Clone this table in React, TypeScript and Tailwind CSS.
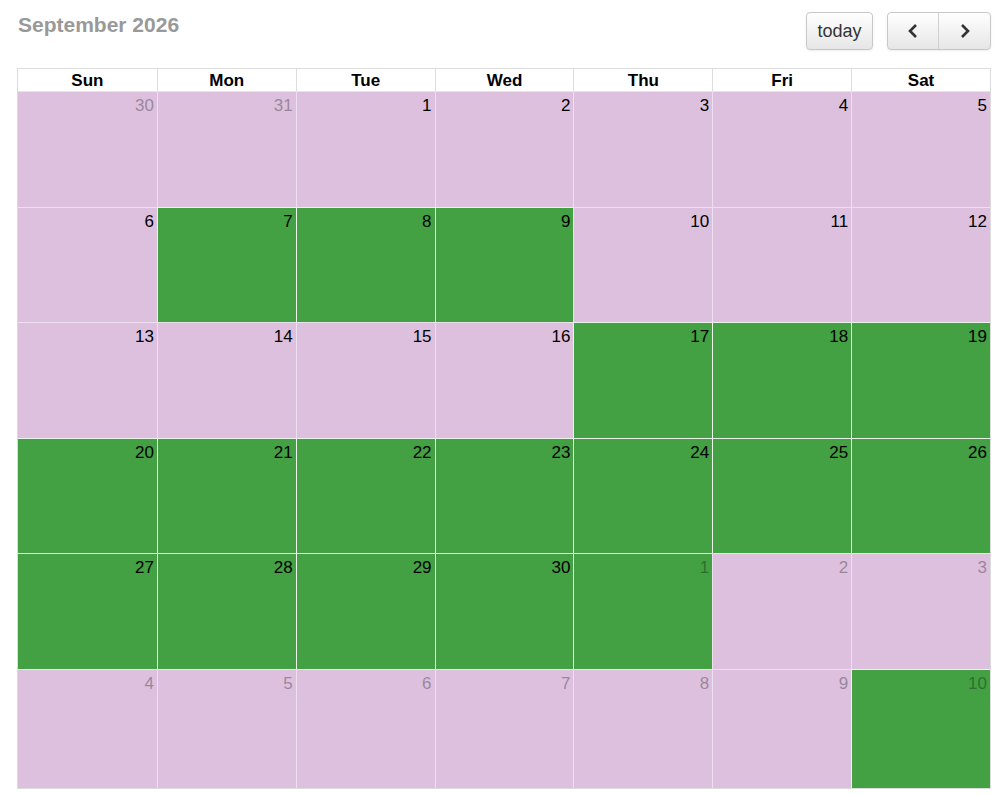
import React from "react";

type Cell = { d: number; other: boolean; green: boolean };

const greenSep = new Set([7, 8, 9, 17, 18, 19, 20, 21, 22, 23, 24, 25, 26, 27, 28, 29, 30]);
const greenOct = new Set([1, 10]);

function buildCells(): Cell[] {
  const cells: Cell[] = [];
  cells.push({ d: 30, other: true, green: false });
  cells.push({ d: 31, other: true, green: false });
  for (let i = 1; i <= 30; i++) cells.push({ d: i, other: false, green: greenSep.has(i) });
  let n = 1;
  while (cells.length < 42) {
    cells.push({ d: n, other: true, green: greenOct.has(n) });
    n++;
  }
  return cells;
}

export default function App() {
  const cells = buildCells();
  const days = ["Sun", "Mon", "Tue", "Wed", "Thu", "Fri", "Sat"];
  return (
    <div className="w-[1000px] h-[794px] bg-white" style={{ fontFamily: '"Liberation Sans", Arial, sans-serif' }}>
      <div className="ml-[17px] w-[974px] pt-[12px]">
        <div className="flex items-start justify-between h-[56px]">
          <h2 className="text-[21px] font-bold text-[#999999] mt-[1px] leading-[24px] ml-[1px]">September 2026</h2>
          <div className="flex gap-[14px]">
            <button className="h-[38px] w-[67px] rounded-[4px] border border-[#c8c8c8] bg-gradient-to-b from-white to-[#e6e6e6] text-[18px] text-[#333] pt-[1px] shadow-[0_1px_2px_rgba(0,0,0,0.08)]">
              today
            </button>
            <div className="flex h-[38px] rounded-[4px] border border-[#c8c8c8] bg-gradient-to-b from-white to-[#e6e6e6] shadow-[0_1px_2px_rgba(0,0,0,0.08)]">
              <button className="w-[51px] flex items-center justify-center border-r border-[#d0d0d0]">
                <svg width="14" height="16" viewBox="0 0 14 16"><path d="M10 2 L4 8 L10 14" stroke="#333" strokeWidth="2.6" fill="none" /></svg>
              </button>
              <button className="w-[51px] flex items-center justify-center">
                <svg width="14" height="16" viewBox="0 0 14 16"><path d="M4 2 L10 8 L4 14" stroke="#333" strokeWidth="2.6" fill="none" /></svg>
              </button>
            </div>
          </div>
        </div>
        <div className="border border-[#dddddd]">
          <div className="grid grid-cols-7 h-[22px]">
            {days.map((d, i) => (
              <div key={d} className={`text-center text-[17px] font-bold leading-[23px] text-black ${i > 0 ? "border-l border-[#dddddd]" : ""}`}>
                {d}
              </div>
            ))}
          </div>
          <div className="grid grid-cols-7 grid-rows-[116px_115px_116px_115px_116px_119px]">
            {cells.map((c, i) => (
              <div
                key={i}
                className={`border-t ${i % 7 > 0 ? "border-l" : ""} ${c.green ? "bg-[#43a043] border-[#e9f3e9]" : "bg-[#dcc0de] border-[#ecdfee]"} text-right pr-[3px] pt-[2px]`}
              >
                <span className={`text-[17px] leading-[22px] text-black ${c.other ? "opacity-30" : ""}`}>{c.d}</span>
              </div>
            ))}
          </div>
        </div>
      </div>
    </div>
  );
}
